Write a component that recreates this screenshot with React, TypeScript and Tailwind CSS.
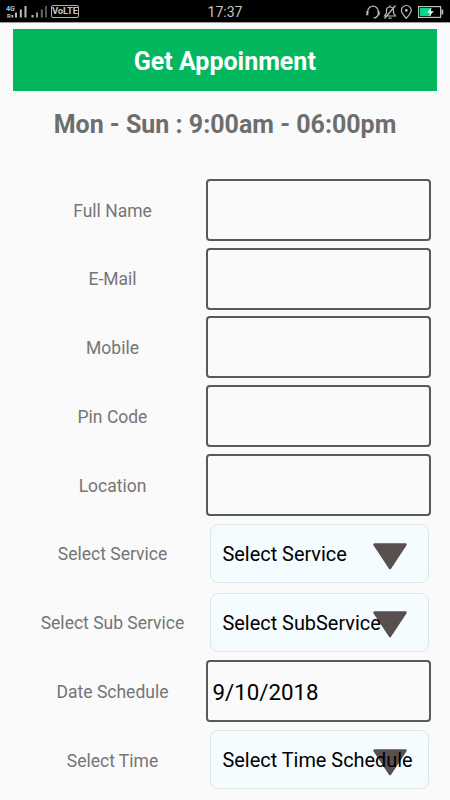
import type { ReactNode } from 'react';

type Field = {
    label: string;
    kind: 'input' | 'select';
    value?: string;
};

const fields: Field[] = [
    { label: 'Full Name', kind: 'input' },
    { label: 'E-Mail', kind: 'input' },
    { label: 'Mobile', kind: 'input' },
    { label: 'Pin Code', kind: 'input' },
    { label: 'Location', kind: 'input' },
    { label: 'Select Service', kind: 'select', value: 'Select Service' },
    { label: 'Select Sub Service', kind: 'select', value: 'Select SubService' },
    { label: 'Date Schedule', kind: 'input', value: '9/10/2018' },
    { label: 'Select Time', kind: 'select', value: 'Select Time Schedule' },
];

export default function App() {
    return (
        <div className="h-[800px] w-[450px] overflow-hidden bg-[#fafafa] font-['Roboto',sans-serif]">
            <StatusBar />
            <main>
                <h1 className="mr-[13px] ml-[12.6px] mt-1.5 flex h-[62px] items-center justify-center bg-[#03b75f] pt-1 text-[25px] font-bold text-white">
                    Get Appoinment
                </h1>
                <p className="mt-[16px] text-center text-[25px] leading-9 font-bold text-[#6e6e6e]">
                    Mon - Sun : 9:00am - 06:00pm
                </p>
                <form className="mt-[32.5px]">
                    {fields.map((field) => (
                        <FormRow key={field.label} label={field.label}>
                            {field.kind === 'input' ? (
                                <input
                                    type="text"
                                    aria-label={field.label}
                                    defaultValue={field.value}
                                    className="h-[62px] w-[225px] rounded border-[2.5px] border-[#555a5a] bg-transparent px-[4.5px] pt-px text-[22.3px] text-black outline-none"
                                />
                            ) : (
                                <SelectBox value={field.value ?? ''} />
                            )}
                        </FormRow>
                    ))}
                </form>
            </main>
        </div>
    );
}

function FormRow({ label, children }: { label: string; children: ReactNode }) {
    return (
        <div className="flex h-[68.75px] items-center">
            <span className="w-[206px] pt-[1.5px] pl-[19px] text-center text-[17.5px] text-[#757575]">{label}</span>
            {children}
        </div>
    );
}

function SelectBox({ value }: { value: string }) {
    return (
        <button
            type="button"
            className="relative ml-1 flex h-[59px] w-[219px] items-center rounded-lg border-[1.5px] border-[#e0e3e4] bg-[#f5fcff] pl-[11.5px] text-left text-[19.9px] whitespace-nowrap text-black"
        >
            <svg className="absolute top-[16.5px] right-5 h-7 w-9" viewBox="0 0 36 28" aria-hidden="true">
                <path
                    d="M2.5 2.5H33.5L18 26Z"
                    fill="#584f4f"
                    stroke="#584f4f"
                    strokeWidth="2.5"
                    strokeLinejoin="round"
                />
            </svg>
            <span className="relative pt-[3px]">{value}</span>
        </button>
    );
}

function StatusBar() {
    return (
        <header className="relative flex h-[23px] items-center justify-between border-b border-[#999] bg-black px-1.5 pt-px text-[#c4c4c4]">
            <div className="flex items-center">
                <svg width="42" height="16" viewBox="0 0 42 16" fill="#bdbdbd" aria-hidden="true">
                    <text x="0" y="6.5" fontSize="7" fontWeight="700" fontFamily="Roboto">4G</text>
                    <text x="1" y="13.5" fontSize="6" fontWeight="700" fontFamily="Roboto">R</text>
                    <rect x="5.5" y="11" width="1.8" height="2.5" />
                    <rect x="9" y="8.5" width="2" height="5" />
                    <rect x="13.8" y="5.5" width="2" height="8" />
                    <rect x="18.5" y="2" width="2" height="11.5" />
                    <rect x="25.5" y="11" width="2" height="2.5" />
                    <rect x="30" y="8.5" width="2" height="5" fill="#999" />
                    <rect x="34.8" y="5.5" width="2" height="8" fill="#666" />
                    <rect x="39" y="2" width="2" height="11.5" fill="#555" />
                </svg>
                <span className="ml-[3px] flex h-[13px] w-[28px] items-center justify-center rounded-xs border border-[#b0b0b0] text-[9.5px] font-bold tracking-[-0.1px]">
                    VoLTE
                </span>
            </div>
            <span className="absolute inset-x-0 top-[3px] text-center text-[14px] leading-[18px]">17:37</span>
            <div className="flex items-center">
                <svg width="80" height="18" viewBox="0 0 80 18" fill="none" stroke="#bdbdbd" strokeWidth="1.2" aria-hidden="true">
                    {/* headset */}
                    <path d="M3.7 10.5V8.5A5.3 5.3 0 0 1 14.3 8.5V10.5M14 11.5C13.5 13.5 12 15 9.5 15" />
                    <path d="M3.3 8.2V12.2M14.7 8.2V12.2" strokeWidth="2" />
                    {/* muted bell */}
                    <path d="M20.5 13H31.5L29.5 10V7.5C29.5 5.3 28.2 4 26 4S22.5 5.3 22.5 7.5V10ZM24.5 15.2H27.5M31.5 2.5L20.5 15.5M26 2.3V4" />
                    {/* location */}
                    <path d="M42.3 15.3C39.5 12 37.4 10 37.4 7.4A4.9 4.9 0 0 1 47.2 7.4C47.2 10 45 12 42.3 15.3Z" />
                    <circle cx="42.3" cy="7.4" r="1.4" fill="#bdbdbd" stroke="none" />
                    {/* battery */}
                    <rect x="54.6" y="3.6" width="22" height="10.8" />
                    <rect x="56" y="5" width="11" height="8" fill="#05d98a" stroke="none" />
                    <path d="M78.3 6.5V11.5" strokeWidth="1.8" />
                    <path d="M67.5 4.5L63 9.8H66L65 13.5L69.8 8.2H66.8Z" fill="#fff" stroke="none" />
                </svg>
            </div>
        </header>
    );
}
